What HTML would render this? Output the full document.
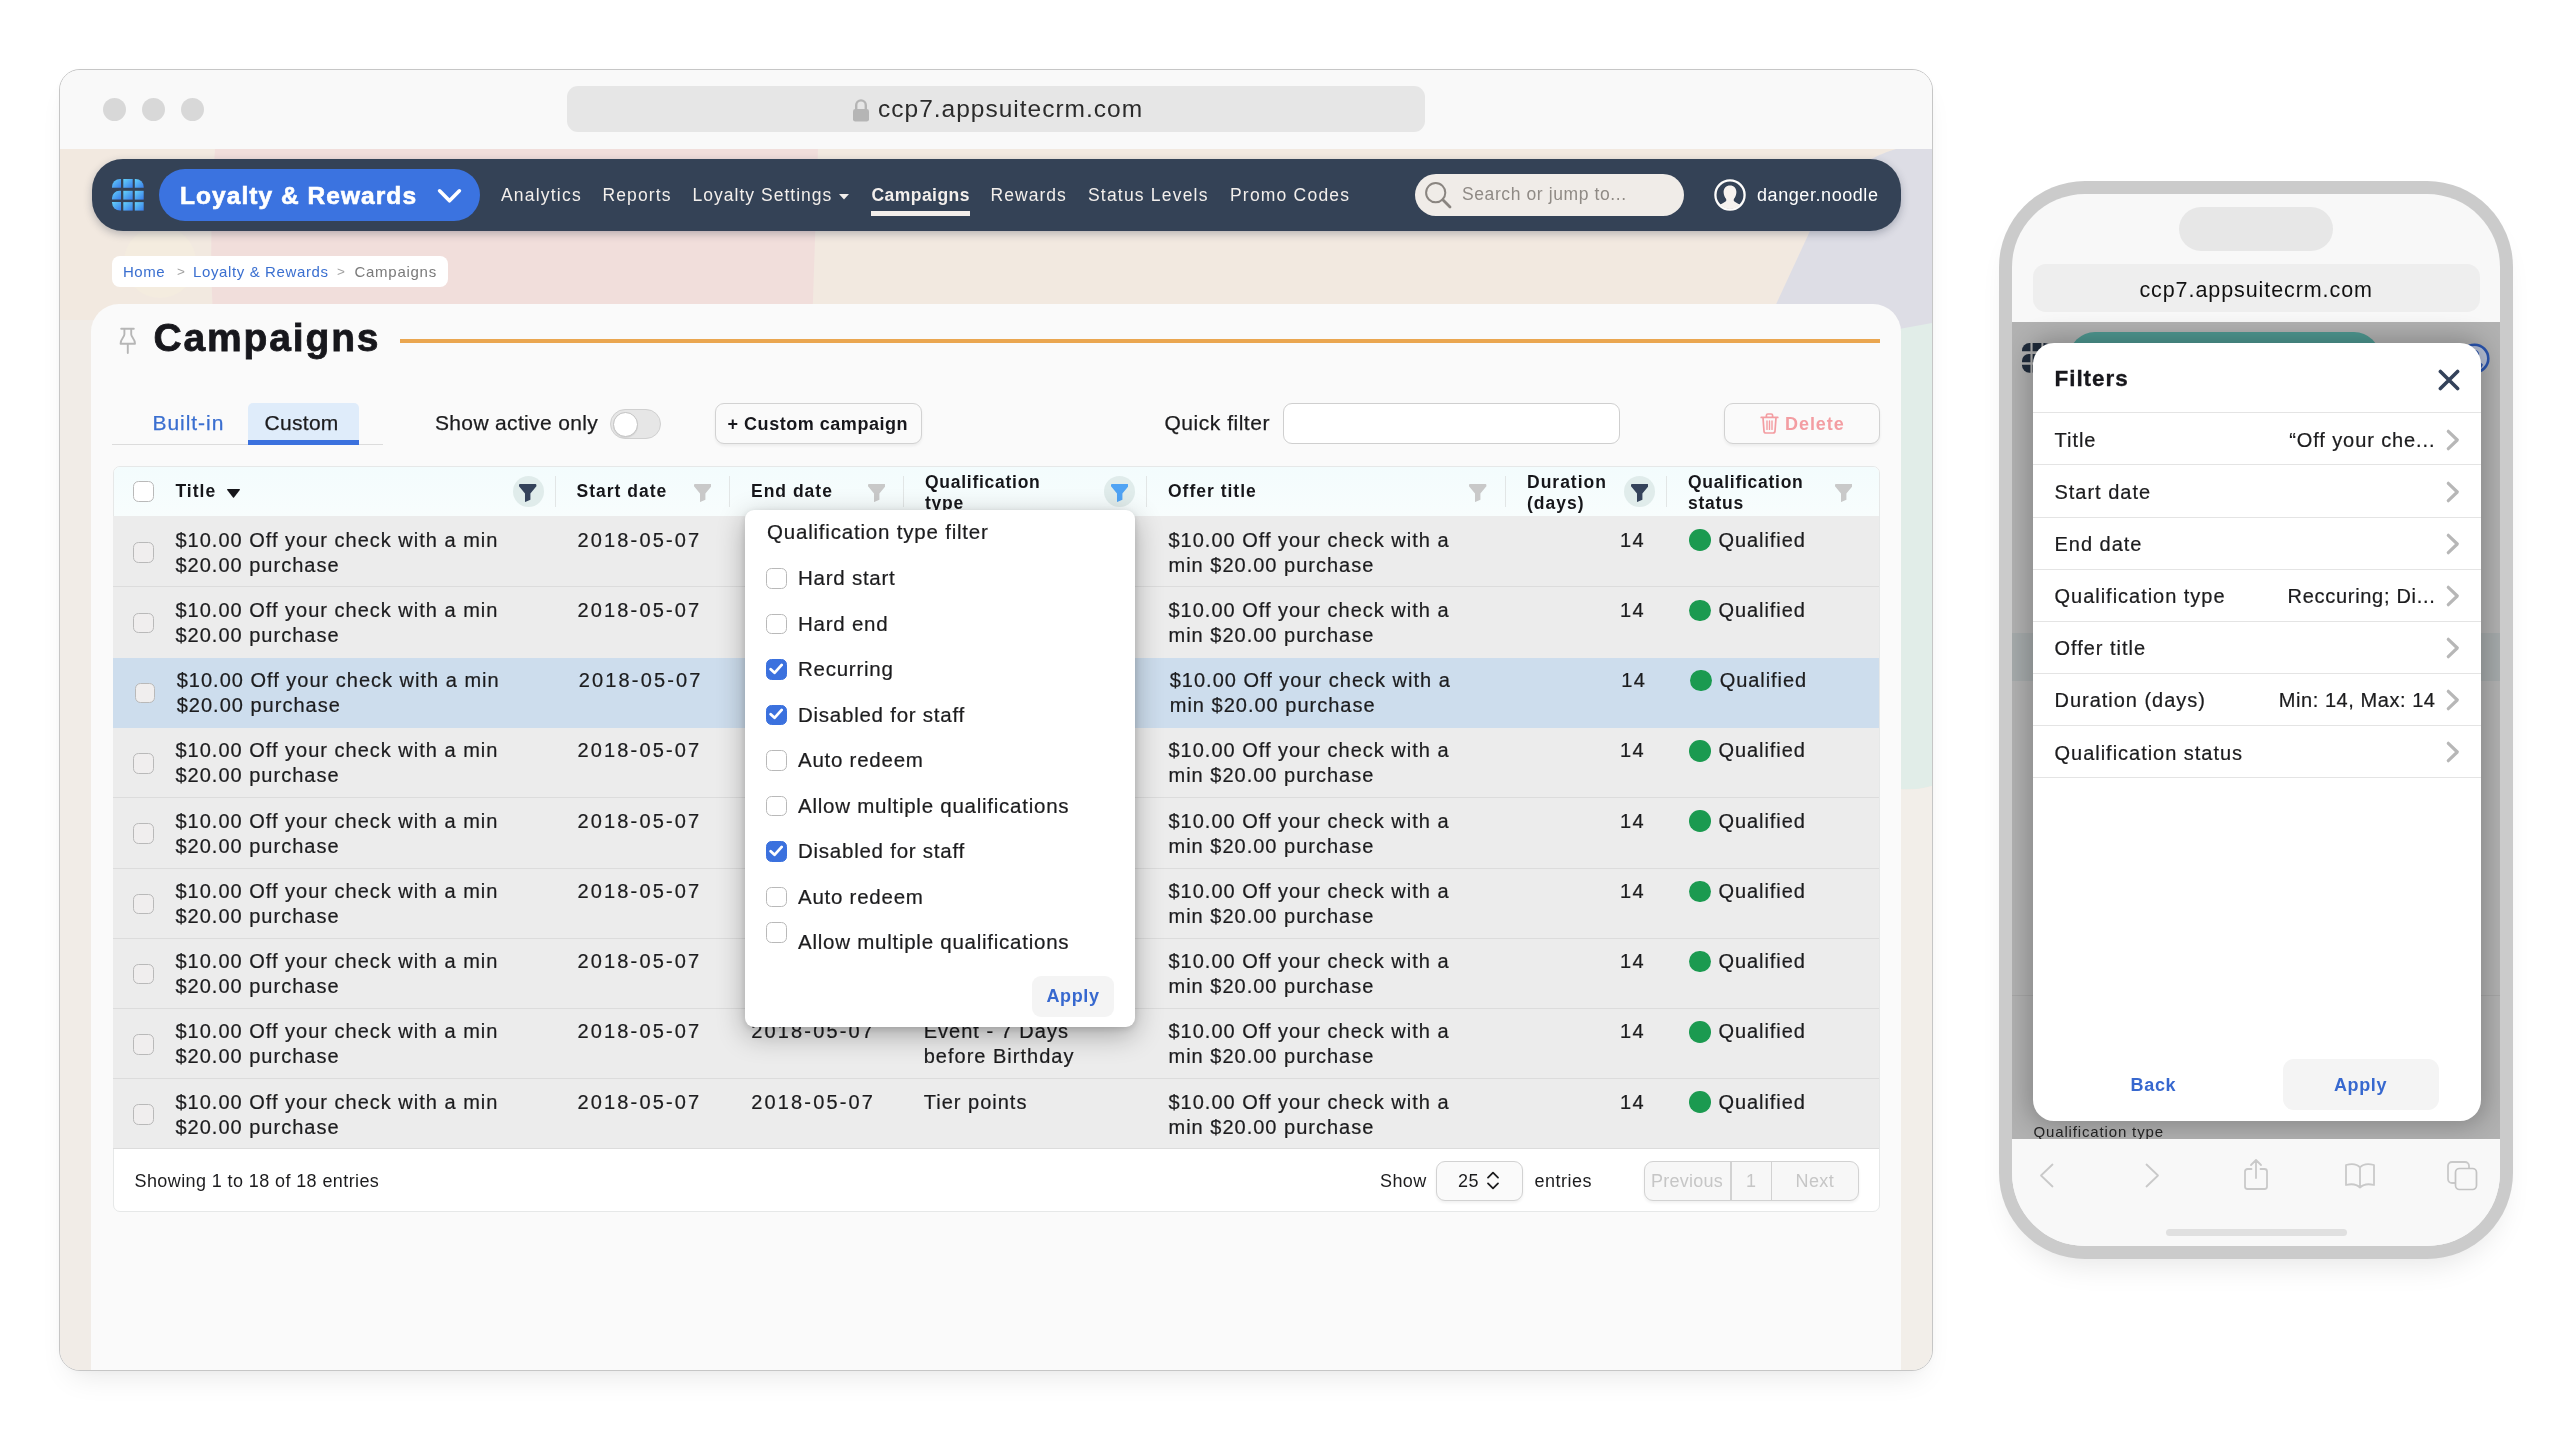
<!DOCTYPE html>
<html lang="en">
<head>
<meta charset="utf-8">
<title>Campaigns - Loyalty &amp; Rewards</title>
<style>
*{box-sizing:border-box;margin:0;padding:0}
html,body{width:2560px;height:1440px;overflow:hidden;background:#fff}
body{font-family:"Liberation Sans",Arial,sans-serif;color:#1c1c1e;position:relative}
.a{position:absolute}
.t{position:absolute;white-space:pre;line-height:1}
.b{font-weight:700}
/* ---------- browser window ---------- */
.win{position:absolute;left:59px;top:69px;width:1874px;height:1302px;border:1px solid #c6c6c6;border-radius:21px;overflow:hidden;background:#f9f9f9;box-shadow:0 16px 30px -12px rgba(0,0,0,.10),0 1px 6px rgba(0,0,0,.02)}
.o{position:absolute;left:-60px;top:-70px;width:2560px;height:1440px;will-change:transform}
.titlebar{left:60px;top:70px;width:1872px;height:79px;background:#f9f9f9}
.dot{width:23px;height:23px;border-radius:50%;background:#d8d8d8;top:97.5px}
.url{left:567px;top:85.5px;width:858px;height:46.5px;border-radius:11px;background:#e6e6e6}
/* ---------- navbar ---------- */
.nav{left:91.5px;top:158.5px;width:1809px;height:72.5px;border-radius:31px;background:#344256;box-shadow:0 3px 8px rgba(30,40,60,.28)}
.pill{left:159px;top:169px;width:321px;height:52px;border-radius:26px;background:#3b73e0}
.nl{color:#f3efec;font-size:17.5px;letter-spacing:1.2px;top:186.5px}
.search{left:1414.5px;top:174px;width:269.5px;height:42px;border-radius:21px;background:#f0ece8}
/* ---------- breadcrumb ---------- */
.bc{left:112px;top:256px;width:335.5px;height:31px;border-radius:8px;background:#fff}
.bc .t{font-size:15px;top:8px;letter-spacing:.5px}
/* ---------- card ---------- */
.card{left:91px;top:304px;width:1809.5px;height:1080px;border-radius:28px 28px 0 0;background:#fafafa}

/* ---------- card content ---------- */
.btn{border:1px solid #d2d2d2;border-radius:9px;background:#fafafa;box-shadow:0 2px 3px rgba(0,0,0,.06)}
.tb{font-size:21px;top:412px;-webkit-text-stroke:.25px}
.th{font-size:17.5px;font-weight:700;color:#16161a;letter-spacing:1px}
.sep{width:1px;top:476px;height:31px;background:#e2e6e6}
.fc{width:31px;height:31px;border-radius:50%;background:#e0eceb;top:476px}
.row{left:113px;width:1766px;height:70.25px;background:#ececec;border-bottom:1.5px solid #dcdcdc}
.row.hl{background:#cddded;border-bottom-color:#cddded}
.cb{width:20.5px;height:20.5px;border-radius:5.5px;border:1.5px solid #b9b9b9;background:#f0eeee}
.cb.w{background:#fff}
.cb.on{background:#3b71de;border-color:#3b71de}
.c{-webkit-text-stroke:.22px #1c1c1e;font-size:20px;line-height:25px;letter-spacing:1px;color:#1c1c1e;white-space:pre;position:absolute}
.gd{width:21.5px;height:21.5px;border-radius:50%;background:#1b9a50}

/* ---------- popup ---------- */
.pop{left:745px;top:510px;width:390px;height:516.5px;border-radius:9px;background:#fff;box-shadow:0 8px 28px rgba(0,0,0,.30),0 2px 6px rgba(0,0,0,.12)}
.pl{font-size:20.5px;letter-spacing:.75px;color:#1c1c1e;-webkit-text-stroke:.22px #1c1c1e}
.chk{position:absolute;left:2px;top:2.6px}
/* ---------- phone ---------- */
.phone{left:1999px;top:181px;width:514px;height:1078px;border-radius:86px;background:#cbcbcb;box-shadow:0 18px 30px -12px rgba(0,0,0,.10)}
.screen{left:2012px;top:193.8px;width:488px;height:1052.3px;border-radius:73px;background:#f8f8f8;overflow:hidden}
.so{position:absolute;left:-2012px;top:-193.8px;width:2560px;height:1440px;will-change:transform}
.mr{left:2033px;width:447.5px;height:52px;border-top:1.5px solid #e4e4e4}
.ml{font-size:20px;letter-spacing:.98px;color:#1c1c1e;-webkit-text-stroke:.22px #1c1c1e}
</style>
</head>
<body>
<div class="win"><div class="o">
  <!-- page background pattern -->
  <svg class="a" style="left:60px;top:149px" width="1872" height="1222" viewBox="60 149 1872 1222">
    <rect x="60" y="149" width="1872" height="1222" fill="#f2e9e0"/>
    <path d="M215 149H818L812 330H214Q208 250 215 149Z" fill="#f1dedb"/>
    <circle cx="160" cy="262" r="36" fill="#f4ecdf"/>
    <path d="M1932 149H1896Q1858 160 1836 190 1818 215 1810 231L1766 326 1766 340H1932Z" fill="#dddde5"/>
    <path d="M1888 331 1932 323V786Q1912 792 1888 788Z" fill="#e1ede8"/>
    <path d="M1888 788Q1912 792 1932 786V1380H1888Z" fill="#f2eee9"/>
    <rect x="60" y="320" width="40" height="1060" fill="#f1ece7"/>
  </svg>
  <div class="a titlebar"></div>
  <div class="a dot" style="left:103px"></div>
  <div class="a dot" style="left:142px"></div>
  <div class="a dot" style="left:181px"></div>
  <div class="a url"></div>
  <svg class="a" style="left:852px;top:98px" width="18" height="24" viewBox="0 0 18 24"><path d="M4.2 12V7.2a4.8 4.8 0 0 1 9.6 0V12" fill="none" stroke="#b5b5b5" stroke-width="2.4"/><rect x="1" y="11" width="16" height="12.6" rx="2.4" fill="#b5b5b5"/></svg>
  <div class="t" style="left:878px;top:97px;font-size:24.5px;letter-spacing:1px;color:#2b2b2b">ccp7.appsuitecrm.com</div>

  <!-- NAVBAR -->
  <div class="a nav"></div>
  <svg class="a" style="left:112px;top:179px" width="32" height="32" viewBox="0 0 32 32">
    <defs><linearGradient id="lg" x1="0" y1="0" x2="1" y2="1"><stop offset="0" stop-color="#64d2fa"/><stop offset="1" stop-color="#3a7ce8"/></linearGradient></defs>
    <g fill="url(#lg)">
      <path d="M0 8.8V8a8 8 0 0 1 8-8h1v8.8z"/><rect x="11.3" y="0" width="9.4" height="8.8"/><path d="M22.8 0h.9a8 8 0 0 1 8 8v.8h-8.9z"/>
      <path d="M0 20.6V19a7.2 7.2 0 0 1 7.2-7.2H9v8.8z"/><rect x="11.3" y="11.8" width="9.4" height="8.8"/><rect x="22.8" y="11.8" width="8.9" height="8.8"/>
      <path d="M0 23.1h9v8.5H8a8 8 0 0 1-8-8z"/><rect x="11.3" y="23.1" width="9.4" height="8.5"/><rect x="22.8" y="23.1" width="8.9" height="8.5"/>
    </g>
  </svg>
  <div class="a pill"></div>
  <div class="t b" style="left:180px;top:184px;font-size:24.5px;letter-spacing:1.05px;color:#fff;-webkit-text-stroke:.6px #fff">Loyalty &amp; Rewards</div>
  <svg class="a" style="left:437px;top:188px" width="25" height="16" viewBox="0 0 25 16"><path d="M2.6 2.8 12.5 12.8 22.4 2.8" fill="none" stroke="#fff" stroke-width="3.6" stroke-linecap="round" stroke-linejoin="round"/></svg>
  <div class="t nl" style="left:501px">Analytics</div>
  <div class="t nl" style="left:602.5px;letter-spacing:1.1px">Reports</div>
  <div class="t nl" style="left:692.5px;letter-spacing:1.02px">Loyalty Settings</div>
  <svg class="a" style="left:839px;top:194px" width="10" height="6" viewBox="0 0 10 6"><path d="M0 0h10L5 5.6z" fill="#f3efec"/></svg>
  <div class="t nl b" style="left:871.5px;letter-spacing:.45px">Campaigns</div>
  <div class="a" style="left:871px;top:211px;width:99px;height:4.5px;background:#f3efec"></div>
  <div class="t nl" style="left:990.5px;letter-spacing:1.05px">Rewards</div>
  <div class="t nl" style="left:1088px">Status Levels</div>
  <div class="t nl" style="left:1230px">Promo Codes</div>
  <div class="a search"></div>
  <svg class="a" style="left:1424px;top:181px" width="30" height="30" viewBox="0 0 30 30"><circle cx="11.7" cy="11.7" r="9.6" fill="none" stroke="#8a8580" stroke-width="2"/><path d="M18.8 18.8 26 26" stroke="#8a8580" stroke-width="2.8" stroke-linecap="round"/></svg>
  <div class="t" style="left:1462px;top:186px;font-size:17.5px;letter-spacing:.6px;color:#8f8a85">Search or jump to...</div>
  <svg class="a" style="left:1714.3px;top:179.2px" width="32" height="32" viewBox="0 0 32 32"><circle cx="16" cy="16" r="14.600" fill="none" stroke="#fdfcfb" stroke-width="2.300"/><clipPath id="uc"><circle cx="16" cy="16" r="14"/></clipPath><g clip-path="url(#uc)" fill="#f6f2ef"><path d="M16 6.400c3.800 0 6.400 2.700 6.400 6.500 0 2.800-1.200 5.600-2.600 7v2.100c1.700 1.500 4.200 2.800 6.600 3.800V32H5.600v-6.200c2.400-1 4.900-2.300 6.600-3.800v-2.100c-1.400-1.400-2.600-4.200-2.600-7 0-3.800 2.600-6.500 6.400-6.500z"/></g></svg>
  <div class="t" style="left:1757px;top:186px;font-size:18px;letter-spacing:.57px;color:#fff">danger.noodle</div>

  <!-- BREADCRUMB -->
  <div class="a bc">
    <div class="t" style="left:11px;color:#3a6fd0">Home</div>
    <div class="t" style="left:65px;color:#a2a2a2;font-size:13.5px;top:8.5px">&gt;</div>
    <div class="t" style="left:81px;color:#3a6fd0;letter-spacing:.62px">Loyalty &amp; Rewards</div>
    <div class="t" style="left:225px;color:#a2a2a2;font-size:13.5px;top:8.5px">&gt;</div>
    <div class="t" style="left:242.500px;color:#7a7a7a;letter-spacing:.72px">Campaigns</div>
  </div>

  <!-- CARD -->
  <div class="a card"></div>

  <svg class="a" style="left:119px;top:327px" width="18" height="27" viewBox="0 0 18 27"><path d="M2.200 1.800h12.600M5.400 1.800v5.500c0 3-3.800 4.500-3.800 9.400h14.400c0-4.900-3.800-6.400-3.800-9.400V1.800M8.800 16.700V26" fill="none" stroke="#b6b6b6" stroke-width="1.900" stroke-linecap="round" stroke-linejoin="round"/></svg>
  <div class="t b" style="left:153.5px;top:318px;font-size:39px;letter-spacing:1.85px;color:#17171c;-webkit-text-stroke:.8px #17171c">Campaigns</div>
  <div class="a" style="left:399.500px;top:339px;width:1480px;height:4px;background:#eaa650"></div>

  <!-- tabs -->
  <div class="a" style="left:112px;top:443.500px;width:270.500px;height:1.500px;background:#dcdcdc"></div>
  <div class="a" style="left:247.500px;top:403px;width:111.500px;height:42px;background:#dfecfa;border-radius:5px 5px 0 0;border-bottom:5px solid #3b71de"></div>
  <div class="t tb" style="left:152.500px;color:#3a6fd0;letter-spacing:.95px">Built-in</div>
  <div class="t tb" style="left:264.500px;letter-spacing:.3px">Custom</div>
  <div class="t tb" style="left:435px;letter-spacing:.34px">Show active only</div>
  <div class="a" style="left:610px;top:408.500px;width:51px;height:30.500px;border-radius:16px;background:#e6e6e6;border:1.500px solid #d0d0d0"></div>
  <div class="a" style="left:613px;top:411.500px;width:25px;height:25px;border-radius:50%;background:#fff;border:1px solid #c2c2c2;box-shadow:0 1px 1px rgba(0,0,0,.08)"></div>
  <div class="a btn" style="left:714.500px;top:403px;width:207px;height:41px"></div>
  <div class="t b" style="left:727.500px;top:414.500px;font-size:18px;letter-spacing:.53px;color:#17171c">+ Custom campaign</div>
  <div class="t tb" style="left:1164.500px;letter-spacing:.52px">Quick filter</div>
  <div class="a" style="left:1282.500px;top:403px;width:337px;height:41px;border:1.500px solid #cfcfcf;border-radius:9px;background:#fff"></div>
  <div class="a btn" style="left:1724px;top:403px;width:155.500px;height:41px"></div>
  <svg class="a" style="left:1760px;top:413px" width="19" height="21" viewBox="0 0 19 21"><g fill="none" stroke="#f39da2" stroke-width="1.700" stroke-linecap="round" stroke-linejoin="round"><path d="M1.200 4.400h16.600M6.400 4.200V2.400c0-.8.600-1.400 1.400-1.400h3.400c.8 0 1.400.6 1.400 1.400v1.800M3 4.600l1 13.600c.1 1.100.9 1.800 2 1.800h7c1.100 0 1.900-.7 2-1.800l1-13.600"/><path d="M7 8v8.400M9.500 8v8.400M12 8v8.400" stroke-width="1.400"/></g></svg>
  <div class="t b" style="left:1785px;top:414.500px;font-size:18px;letter-spacing:.95px;color:#f39da2">Delete</div>
  <div class="a" style="left:112.500px;top:466px;width:1767px;height:746px;border:1px solid #e6e8e8;border-radius:7px;background:#fff;overflow:hidden"></div>
  <div class="a" style="left:113.500px;top:467px;width:1765px;height:49.500px;border-radius:6px 6px 0 0;background:linear-gradient(#f3fcfd,#f8fdfd)"></div>
  <div class="a cb w" style="left:133px;top:481px"></div>
  <div class="t th" style="left:175.500px;top:483px">Title</div>
  <svg class="a" style="left:227px;top:488.500px" width="13" height="9" viewBox="0 0 13 9"><path d="M.6 0h11.800c.5 0 .7.500.4.900L7 8.400c-.300.300-.700.300-1 0L.2.900C-.1.500.1 0 .6 0z" fill="#16161a"/></svg>
  <div class="a fc" style="left:512.500px"></div>
  <svg class="a" style="left:519.2px;top:483.800px" width="17.400" height="18.200" preserveAspectRatio="none" viewBox="0 0 18 18.200"><path d="M.9 0h16.200c.5 0 .9.400.9.900v1.300L11.800 9.600v6.100L6.200 18.100V9.600L0 2.200V.9C0 .4.400 0 .9 0z" fill="#34425a"/></svg>
  <div class="a sep" style="left:554.500px"></div>
  <div class="t th" style="left:576.500px;top:483px">Start date</div>
  <svg class="a" style="left:693.6px;top:483.800px" width="17.400" height="18.200" preserveAspectRatio="none" viewBox="0 0 18 18.200"><path d="M.9 0h16.200c.5 0 .9.400.9.900v1.300L11.800 9.600v6.100L6.200 18.100V9.600L0 2.200V.9C0 .4.400 0 .9 0z" fill="#c9c9c9"/></svg>
  <div class="a sep" style="left:728.500px"></div>
  <div class="t th" style="left:751px;top:483px">End date</div>
  <svg class="a" style="left:867.5px;top:483.800px" width="17.400" height="18.200" preserveAspectRatio="none" viewBox="0 0 18 18.200"><path d="M.9 0h16.200c.5 0 .9.400.9.900v1.300L11.800 9.600v6.100L6.200 18.100V9.600L0 2.200V.9C0 .4.400 0 .9 0z" fill="#c9c9c9"/></svg>
  <div class="a sep" style="left:903px"></div>
  <div class="t th" style="left:925px;top:472.200px;line-height:20.400px;letter-spacing:.73px">Qualification
type</div>
  <div class="a fc" style="left:1104px"></div>
  <svg class="a" style="left:1110.6px;top:483.800px" width="17.400" height="18.200" preserveAspectRatio="none" viewBox="0 0 18 18.200"><path d="M.9 0h16.200c.5 0 .9.400.9.900v1.300L11.800 9.600v6.100L6.200 18.100V9.600L0 2.200V.9C0 .4.400 0 .9 0z" fill="#4fa3f4"/></svg>
  <div class="a sep" style="left:1145.500px"></div>
  <div class="t th" style="left:1168px;top:483px">Offer title</div>
  <svg class="a" style="left:1469.3px;top:483.800px" width="17.400" height="18.200" preserveAspectRatio="none" viewBox="0 0 18 18.200"><path d="M.9 0h16.200c.5 0 .9.400.9.900v1.300L11.800 9.600v6.100L6.200 18.100V9.600L0 2.200V.9C0 .4.400 0 .9 0z" fill="#c9c9c9"/></svg>
  <div class="a sep" style="left:1504.500px"></div>
  <div class="t th" style="left:1527px;top:472.200px;line-height:20.400px">Duration
(days)</div>
  <div class="a fc" style="left:1624px"></div>
  <svg class="a" style="left:1630.6px;top:483.800px" width="17.400" height="18.200" preserveAspectRatio="none" viewBox="0 0 18 18.200"><path d="M.9 0h16.200c.5 0 .9.400.9.900v1.300L11.800 9.600v6.100L6.200 18.100V9.600L0 2.200V.9C0 .4.400 0 .9 0z" fill="#34425a"/></svg>
  <div class="a sep" style="left:1665.500px"></div>
  <div class="t th" style="left:1688px;top:472.200px;line-height:20.400px;letter-spacing:.73px">Qualification
status</div>
  <svg class="a" style="left:1835px;top:483.800px" width="17.400" height="18.200" preserveAspectRatio="none" viewBox="0 0 18 18.200"><path d="M.9 0h16.200c.5 0 .9.400.9.900v1.300L11.800 9.600v6.100L6.200 18.100V9.600L0 2.200V.9C0 .4.400 0 .9 0z" fill="#c9c9c9"/></svg>
  <div class="a" style="left:113px;top:516.25px;width:1766px;height:633px;background:#ececec"></div>
  <div class="a" style="left:113px;top:657.5px;width:1766px;height:70.25px;background:#cddded"></div>
  <div class="a" style="left:113px;top:586px;width:1766px;height:1px;background:#dcdcdc"></div>
  <div class="a" style="left:113px;top:797px;width:1766px;height:1px;background:#dcdcdc"></div>
  <div class="a" style="left:113px;top:868px;width:1766px;height:1px;background:#dcdcdc"></div>
  <div class="a" style="left:113px;top:938px;width:1766px;height:1px;background:#dcdcdc"></div>
  <div class="a" style="left:113px;top:1008px;width:1766px;height:1px;background:#dcdcdc"></div>
  <div class="a" style="left:113px;top:1078px;width:1766px;height:1px;background:#dcdcdc"></div>
  <div class="a" style="left:113px;top:1148px;width:1766px;height:1px;background:#dcdcdc"></div>
  <div class="a cb" style="left:133.25px;top:542.45px"></div>
  <div class="c" style="left:175.5px;top:527.55px">$10.00 Off your check with a min
$20.00 purchase</div>
  <div class="c" style="left:577.5px;top:527.55px;letter-spacing:2.15px">2018-05-07</div>
  <div class="c" style="left:751.25px;top:527.55px;letter-spacing:2.15px">2018-05-07</div>
  <div class="c" style="left:923.75px;top:527.55px">Event - 7 Days
before Birthday</div>
  <div class="c" style="left:1168.5px;top:527.55px">$10.00 Off your check with a
min $20.00 purchase</div>
  <div class="c" style="left:1543px;width:102px;text-align:right;top:527.55px;letter-spacing:1.4px;padding-right:0">14</div>
  <div class="a gd" style="left:1689px;top:529.25px"></div>
  <div class="c" style="left:1718.5px;top:527.55px;letter-spacing:.92px">Qualified</div>
  <div class="a cb" style="left:133.25px;top:612.70px"></div>
  <div class="c" style="left:175.5px;top:597.80px">$10.00 Off your check with a min
$20.00 purchase</div>
  <div class="c" style="left:577.5px;top:597.80px;letter-spacing:2.15px">2018-05-07</div>
  <div class="c" style="left:751.25px;top:597.80px;letter-spacing:2.15px">2018-05-07</div>
  <div class="c" style="left:923.75px;top:597.80px">Event - 7 Days
before Birthday</div>
  <div class="c" style="left:1168.5px;top:597.80px">$10.00 Off your check with a
min $20.00 purchase</div>
  <div class="c" style="left:1543px;width:102px;text-align:right;top:597.80px;letter-spacing:1.4px;padding-right:0">14</div>
  <div class="a gd" style="left:1689px;top:599.50px"></div>
  <div class="c" style="left:1718.5px;top:597.80px;letter-spacing:.92px">Qualified</div>
  <div class="a cb" style="left:134.5px;top:682.95px"></div>
  <div class="c" style="left:176.75px;top:668.05px">$10.00 Off your check with a min
$20.00 purchase</div>
  <div class="c" style="left:578.75px;top:668.05px;letter-spacing:2.15px">2018-05-07</div>
  <div class="c" style="left:752.5px;top:668.05px;letter-spacing:2.15px">2018-05-07</div>
  <div class="c" style="left:925.0px;top:668.05px">Event - 7 Days
before Birthday</div>
  <div class="c" style="left:1169.75px;top:668.05px">$10.00 Off your check with a
min $20.00 purchase</div>
  <div class="c" style="left:1544.25px;width:102px;text-align:right;top:668.05px;letter-spacing:1.4px;padding-right:0">14</div>
  <div class="a gd" style="left:1690.25px;top:669.75px"></div>
  <div class="c" style="left:1719.75px;top:668.05px;letter-spacing:.92px">Qualified</div>
  <div class="a cb" style="left:133.25px;top:753.20px"></div>
  <div class="c" style="left:175.5px;top:738.30px">$10.00 Off your check with a min
$20.00 purchase</div>
  <div class="c" style="left:577.5px;top:738.30px;letter-spacing:2.15px">2018-05-07</div>
  <div class="c" style="left:751.25px;top:738.30px;letter-spacing:2.15px">2018-05-07</div>
  <div class="c" style="left:923.75px;top:738.30px">Event - 7 Days
before Birthday</div>
  <div class="c" style="left:1168.5px;top:738.30px">$10.00 Off your check with a
min $20.00 purchase</div>
  <div class="c" style="left:1543px;width:102px;text-align:right;top:738.30px;letter-spacing:1.4px;padding-right:0">14</div>
  <div class="a gd" style="left:1689px;top:740.00px"></div>
  <div class="c" style="left:1718.5px;top:738.30px;letter-spacing:.92px">Qualified</div>
  <div class="a cb" style="left:133.25px;top:823.45px"></div>
  <div class="c" style="left:175.5px;top:808.55px">$10.00 Off your check with a min
$20.00 purchase</div>
  <div class="c" style="left:577.5px;top:808.55px;letter-spacing:2.15px">2018-05-07</div>
  <div class="c" style="left:751.25px;top:808.55px;letter-spacing:2.15px">2018-05-07</div>
  <div class="c" style="left:923.75px;top:808.55px">Event - 7 Days
before Birthday</div>
  <div class="c" style="left:1168.5px;top:808.55px">$10.00 Off your check with a
min $20.00 purchase</div>
  <div class="c" style="left:1543px;width:102px;text-align:right;top:808.55px;letter-spacing:1.4px;padding-right:0">14</div>
  <div class="a gd" style="left:1689px;top:810.25px"></div>
  <div class="c" style="left:1718.5px;top:808.55px;letter-spacing:.92px">Qualified</div>
  <div class="a cb" style="left:133.25px;top:893.70px"></div>
  <div class="c" style="left:175.5px;top:878.80px">$10.00 Off your check with a min
$20.00 purchase</div>
  <div class="c" style="left:577.5px;top:878.80px;letter-spacing:2.15px">2018-05-07</div>
  <div class="c" style="left:751.25px;top:878.80px;letter-spacing:2.15px">2018-05-07</div>
  <div class="c" style="left:923.75px;top:878.80px">Event - 7 Days
before Birthday</div>
  <div class="c" style="left:1168.5px;top:878.80px">$10.00 Off your check with a
min $20.00 purchase</div>
  <div class="c" style="left:1543px;width:102px;text-align:right;top:878.80px;letter-spacing:1.4px;padding-right:0">14</div>
  <div class="a gd" style="left:1689px;top:880.50px"></div>
  <div class="c" style="left:1718.5px;top:878.80px;letter-spacing:.92px">Qualified</div>
  <div class="a cb" style="left:133.25px;top:963.95px"></div>
  <div class="c" style="left:175.5px;top:949.05px">$10.00 Off your check with a min
$20.00 purchase</div>
  <div class="c" style="left:577.5px;top:949.05px;letter-spacing:2.15px">2018-05-07</div>
  <div class="c" style="left:751.25px;top:949.05px;letter-spacing:2.15px">2018-05-07</div>
  <div class="c" style="left:923.75px;top:949.05px">Event - 7 Days
before Birthday</div>
  <div class="c" style="left:1168.5px;top:949.05px">$10.00 Off your check with a
min $20.00 purchase</div>
  <div class="c" style="left:1543px;width:102px;text-align:right;top:949.05px;letter-spacing:1.4px;padding-right:0">14</div>
  <div class="a gd" style="left:1689px;top:950.75px"></div>
  <div class="c" style="left:1718.5px;top:949.05px;letter-spacing:.92px">Qualified</div>
  <div class="a cb" style="left:133.25px;top:1034.20px"></div>
  <div class="c" style="left:175.5px;top:1019.30px">$10.00 Off your check with a min
$20.00 purchase</div>
  <div class="c" style="left:577.5px;top:1019.30px;letter-spacing:2.15px">2018-05-07</div>
  <div class="c" style="left:751.25px;top:1019.30px;letter-spacing:2.15px">2018-05-07</div>
  <div class="c" style="left:923.75px;top:1019.30px">Event - 7 Days
before Birthday</div>
  <div class="c" style="left:1168.5px;top:1019.30px">$10.00 Off your check with a
min $20.00 purchase</div>
  <div class="c" style="left:1543px;width:102px;text-align:right;top:1019.30px;letter-spacing:1.4px;padding-right:0">14</div>
  <div class="a gd" style="left:1689px;top:1021.00px"></div>
  <div class="c" style="left:1718.5px;top:1019.30px;letter-spacing:.92px">Qualified</div>
  <div class="a cb" style="left:133.25px;top:1104.45px"></div>
  <div class="c" style="left:175.5px;top:1089.55px">$10.00 Off your check with a min
$20.00 purchase</div>
  <div class="c" style="left:577.5px;top:1089.55px;letter-spacing:2.15px">2018-05-07</div>
  <div class="c" style="left:751.25px;top:1089.55px;letter-spacing:2.15px">2018-05-07</div>
  <div class="c" style="left:923.75px;top:1089.55px">Tier points</div>
  <div class="c" style="left:1168.5px;top:1089.55px">$10.00 Off your check with a
min $20.00 purchase</div>
  <div class="c" style="left:1543px;width:102px;text-align:right;top:1089.55px;letter-spacing:1.4px;padding-right:0">14</div>
  <div class="a gd" style="left:1689px;top:1091.25px"></div>
  <div class="c" style="left:1718.5px;top:1089.55px;letter-spacing:.92px">Qualified</div>
  <div class="t" style="left:134.500px;top:1172px;font-size:18px;letter-spacing:.4px">Showing 1 to 18 of 18 entries</div>
  <div class="t" style="left:1380px;top:1172px;font-size:18px;letter-spacing:.4px">Show</div>
  <div class="a btn" style="left:1435.500px;top:1160.500px;width:87.500px;height:40px"></div>
  <div class="t" style="left:1458px;top:1172px;font-size:18px;letter-spacing:.6px">25</div>
  <svg class="a" style="left:1486px;top:1170px" width="14" height="21" viewBox="0 0 14 21"><path d="M2 7.600 7 2.600l5 5M2 13.400l5 5 5-5" fill="none" stroke="#1c1c1e" stroke-width="1.800" stroke-linecap="round" stroke-linejoin="round"/></svg>
  <div class="t" style="left:1534.500px;top:1172px;font-size:18px;letter-spacing:.5px">entries</div>
  <div class="a btn" style="left:1643.500px;top:1160.500px;width:215px;height:40px;background:#f7f7f7"></div>
  <div class="a" style="left:1730px;top:1161.500px;width:1.500px;height:38px;background:#d2d2d2"></div>
  <div class="a" style="left:1770.500px;top:1161.500px;width:1.500px;height:38px;background:#d2d2d2"></div>
  <div class="t" style="left:1651px;top:1172px;font-size:18px;letter-spacing:.25px;color:#c6c6c6">Previous</div>
  <div class="t" style="left:1746px;top:1172px;font-size:18px;color:#c6c6c6">1</div>
  <div class="t" style="left:1795.500px;top:1172px;font-size:18px;letter-spacing:.4px;color:#c6c6c6">Next</div>
  <div class="a pop"></div>
  <div class="t pl" style="left:767px;top:522px;letter-spacing:.8px">Qualification type filter</div>
  <div class="a cb w" style="left:766px;top:568.25px"></div>
  <div class="t pl" style="left:798px;top:568.00px">Hard start</div>
  <div class="a cb w" style="left:766px;top:613.75px"></div>
  <div class="t pl" style="left:798px;top:613.50px">Hard end</div>
  <div class="a cb w on" style="left:766px;top:659.25px"><svg class="chk" width="14.4" height="12" viewBox="0 0 12 10"><path d="M1.400 5.200 4.600 8.200 10.600 1.600" fill="none" stroke="#fff" stroke-width="2.300" stroke-linecap="round" stroke-linejoin="round"/></svg></div>
  <div class="t pl" style="left:798px;top:659.00px">Recurring</div>
  <div class="a cb w on" style="left:766px;top:704.75px"><svg class="chk" width="14.4" height="12" viewBox="0 0 12 10"><path d="M1.400 5.200 4.600 8.200 10.600 1.600" fill="none" stroke="#fff" stroke-width="2.300" stroke-linecap="round" stroke-linejoin="round"/></svg></div>
  <div class="t pl" style="left:798px;top:704.50px">Disabled for staff</div>
  <div class="a cb w" style="left:766px;top:750.25px"></div>
  <div class="t pl" style="left:798px;top:750.00px">Auto redeem</div>
  <div class="a cb w" style="left:766px;top:795.75px"></div>
  <div class="t pl" style="left:798px;top:795.50px">Allow multiple qualifications</div>
  <div class="a cb w on" style="left:766px;top:841.25px"><svg class="chk" width="14.4" height="12" viewBox="0 0 12 10"><path d="M1.400 5.200 4.600 8.200 10.600 1.600" fill="none" stroke="#fff" stroke-width="2.300" stroke-linecap="round" stroke-linejoin="round"/></svg></div>
  <div class="t pl" style="left:798px;top:841.00px">Disabled for staff</div>
  <div class="a cb w" style="left:766px;top:886.75px"></div>
  <div class="t pl" style="left:798px;top:886.50px">Auto redeem</div>
  <div class="a cb w" style="left:766px;top:922.25px"></div>
  <div class="t pl" style="left:798px;top:932.00px">Allow multiple qualifications</div>
  <div class="a" style="left:1031.500px;top:975.500px;width:82.500px;height:41px;border-radius:9px;background:#f4f4f4"></div>
  <div class="t b" style="left:1046.500px;top:987px;font-size:18px;letter-spacing:.6px;color:#3768cf">Apply</div>


</div></div>
<div class="a phone"></div>
<div class="a screen"><div class="so">
<div class="a" style="left:2178.800px;top:207.300px;width:154.400px;height:43.800px;border-radius:22px;background:#e7e7e7"></div>
<div class="a" style="left:2033px;top:264.400px;width:446.500px;height:47.500px;border-radius:13px;background:#eeeeee"></div>
<div class="t" style="left:2139.400px;top:279.500px;font-size:21.500px;letter-spacing:.92px;color:#111">ccp7.appsuitecrm.com</div>
<div class="a" style="left:2012px;top:322px;width:488px;height:817px;background:#b1b1b1"></div>
<div class="a" style="left:2012px;top:633px;width:488px;height:48px;background:#a5aaab"></div>
<div class="a" style="left:2012px;top:995px;width:488px;height:1px;background:#a6a6a6"></div>
<svg class="a" style="left:2022px;top:343px" width="30" height="30" viewBox="0 0 32 32"><g fill="#202c3c"><path d="M0 8.800V8a8 8 0 0 1 8-8h1v8.800z"/><rect x="11.300" y="0" width="9.400" height="8.800"/><path d="M22.800 0h.900a8 8 0 0 1 8 8v.800h-8.900z"/><path d="M0 20.600V19a7.200 7.200 0 0 1 7.200-7.200H9v8.800z"/><rect x="11.300" y="11.800" width="9.400" height="8.800"/><rect x="22.800" y="11.800" width="8.900" height="8.800"/><path d="M0 23.100h9v8.500H8a8 8 0 0 1-8-8z"/><rect x="11.300" y="23.100" width="9.400" height="8.500"/><rect x="22.800" y="23.100" width="8.900" height="8.500"/></g></svg>
<div class="a" style="left:2069px;top:332.200px;width:311px;height:52px;border-radius:26px;background:#4e9790"></div>
<svg class="a" style="left:2459px;top:343px" width="31" height="31" viewBox="0 0 31 31"><circle cx="15.500" cy="15.500" r="13.800" fill="#b8c2d8" stroke="#2a55b0" stroke-width="2.600"/><path d="M15.500 7c2.800 0 4.600 2 4.600 4.800 0 2.100-.800 3.800-1.900 4.900v1.500c2.300.800 4.900 1.700 5.700 3.500l-2 3.800H9.100l-2-3.800c.800-1.800 3.400-2.700 5.700-3.500v-1.500c-1.100-1.100-1.900-2.800-1.900-4.900C10.900 9 12.700 7 15.500 7z" fill="#2a55b0"/></svg>
<div class="a" style="left:2033px;top:342.800px;width:447.500px;height:778.400px;border-radius:21px;background:#fff;box-shadow:0 0 24px 5px rgba(0,0,0,.24)"></div>
<div class="t b" style="left:2054.500px;top:367.500px;font-size:22.500px;letter-spacing:.95px;color:#17171c;-webkit-text-stroke:.3px #17171c">Filters</div>
<svg class="a" style="left:2437px;top:368px" width="24" height="24" viewBox="0 0 24 24"><path d="M3.400 3.400 20.600 20.600M20.600 3.400 3.400 20.600" stroke="#34425a" stroke-width="3.600" stroke-linecap="round"/></svg>
<div class="a mr" style="top:412.40px"></div>
<div class="t ml" style="left:2054.500px;top:430.20px">Title</div>
<div class="t ml" style="left:2135.500px;width:300px;text-align:right;top:430.20px;letter-spacing:.9px">“Off your che...</div>
<svg class="a" style="left:2445.500px;top:428.60px" width="14" height="22" viewBox="0 0 14 22"><path d="M2.300 2.300 11.300 11 2.300 19.700" fill="none" stroke="#b7b7b7" stroke-width="3.200" stroke-linecap="round" stroke-linejoin="round"/></svg>
<div class="a mr" style="top:464.45px"></div>
<div class="t ml" style="left:2054.500px;top:482.25px">Start date</div>
<svg class="a" style="left:2445.500px;top:480.65px" width="14" height="22" viewBox="0 0 14 22"><path d="M2.300 2.300 11.300 11 2.300 19.700" fill="none" stroke="#b7b7b7" stroke-width="3.200" stroke-linecap="round" stroke-linejoin="round"/></svg>
<div class="a mr" style="top:516.50px"></div>
<div class="t ml" style="left:2054.500px;top:534.30px">End date</div>
<svg class="a" style="left:2445.500px;top:532.70px" width="14" height="22" viewBox="0 0 14 22"><path d="M2.300 2.300 11.300 11 2.300 19.700" fill="none" stroke="#b7b7b7" stroke-width="3.200" stroke-linecap="round" stroke-linejoin="round"/></svg>
<div class="a mr" style="top:568.55px"></div>
<div class="t ml" style="left:2054.500px;top:586.35px">Qualification type</div>
<div class="t ml" style="left:2135.500px;width:300px;text-align:right;top:586.35px;letter-spacing:.7px">Reccuring; Di...</div>
<svg class="a" style="left:2445.500px;top:584.75px" width="14" height="22" viewBox="0 0 14 22"><path d="M2.300 2.300 11.300 11 2.300 19.700" fill="none" stroke="#b7b7b7" stroke-width="3.200" stroke-linecap="round" stroke-linejoin="round"/></svg>
<div class="a mr" style="top:620.60px"></div>
<div class="t ml" style="left:2054.500px;top:638.40px">Offer title</div>
<svg class="a" style="left:2445.500px;top:636.80px" width="14" height="22" viewBox="0 0 14 22"><path d="M2.300 2.300 11.300 11 2.300 19.700" fill="none" stroke="#b7b7b7" stroke-width="3.200" stroke-linecap="round" stroke-linejoin="round"/></svg>
<div class="a mr" style="top:672.65px"></div>
<div class="t ml" style="left:2054.500px;top:690.45px">Duration (days)</div>
<div class="t ml" style="left:2135.500px;width:300px;text-align:right;top:690.45px;letter-spacing:.55px">Min: 14, Max: 14</div>
<svg class="a" style="left:2445.500px;top:688.85px" width="14" height="22" viewBox="0 0 14 22"><path d="M2.300 2.300 11.300 11 2.300 19.700" fill="none" stroke="#b7b7b7" stroke-width="3.200" stroke-linecap="round" stroke-linejoin="round"/></svg>
<div class="a mr" style="top:724.70px"></div>
<div class="t ml" style="left:2054.500px;top:742.50px">Qualification status</div>
<svg class="a" style="left:2445.500px;top:740.90px" width="14" height="22" viewBox="0 0 14 22"><path d="M2.300 2.300 11.300 11 2.300 19.700" fill="none" stroke="#b7b7b7" stroke-width="3.200" stroke-linecap="round" stroke-linejoin="round"/></svg>
<div class="a mr" style="top:776.75px;height:2px"></div>
<div class="t b" style="left:2130.500px;top:1075.500px;font-size:18px;letter-spacing:.7px;color:#3768cf">Back</div>
<div class="a" style="left:2282.500px;top:1059px;width:156.500px;height:51px;border-radius:11px;background:#f4f4f4"></div>
<div class="t b" style="left:2334px;top:1075.500px;font-size:18px;letter-spacing:.6px;color:#3768cf">Apply</div>
<div class="t" style="left:2033.500px;top:1123.500px;font-size:15px;letter-spacing:.85px;color:#222">Qualification type</div>
<div class="a" style="left:2012px;top:1139px;width:488px;height:110px;background:#f8f8f8"></div>
<svg class="a" style="left:2038px;top:1162px" width="18" height="27" viewBox="0 0 18 27"><path d="M14.500 2.500 3 13.500 14.500 24.500" fill="none" stroke="#c9c9c9" stroke-width="1.800" stroke-linecap="round" stroke-linejoin="round"/></svg>
<svg class="a" style="left:2143px;top:1162px" width="18" height="27" viewBox="0 0 18 27"><path d="M3.500 2.500 15 13.500 3.500 24.500" fill="none" stroke="#c9c9c9" stroke-width="1.800" stroke-linecap="round" stroke-linejoin="round"/></svg>
<svg class="a" style="left:2242.500px;top:1158px" width="26" height="34" viewBox="0 0 26 34"><path d="M8.500 11H4.500c-1.400 0-2.500 1.100-2.500 2.500v15c0 1.400 1.100 2.500 2.500 2.500h17c1.400 0 2.500-1.100 2.500-2.500v-15c0-1.400-1.100-2.500-2.500-2.500h-4M13 20V2.500M8 7l5-5 5 5" fill="none" stroke="#c9c9c9" stroke-width="1.800" stroke-linecap="round" stroke-linejoin="round"/></svg>
<svg class="a" style="left:2342.500px;top:1160.500px" width="34" height="30" viewBox="0 0 34 30"><path d="M17 6.500C14.500 3.500 9 2.500 3 4v20c6-1.500 11-.500 14 2.500 3-3 8-4 14-2.500V4C25 2.500 19.500 3.500 17 6.500zM17 6.500v20" fill="none" stroke="#c9c9c9" stroke-width="1.800" stroke-linecap="round" stroke-linejoin="round"/></svg>
<svg class="a" style="left:2446px;top:1159.500px" width="34" height="32" viewBox="0 0 34 32"><rect x="2" y="2" width="21" height="21" rx="4" fill="none" stroke="#c9c9c9" stroke-width="1.800" stroke-linecap="round" stroke-linejoin="round"/><rect x="9.500" y="8.500" width="21" height="21" rx="4" fill="#f8f8f8" stroke="#c4c4c4" stroke-width="1.700"/></svg>
<div class="a" style="left:2166.300px;top:1229px;width:181px;height:6.500px;border-radius:4px;background:#e0e0e0"></div>
</div></div>
</body>
</html>
